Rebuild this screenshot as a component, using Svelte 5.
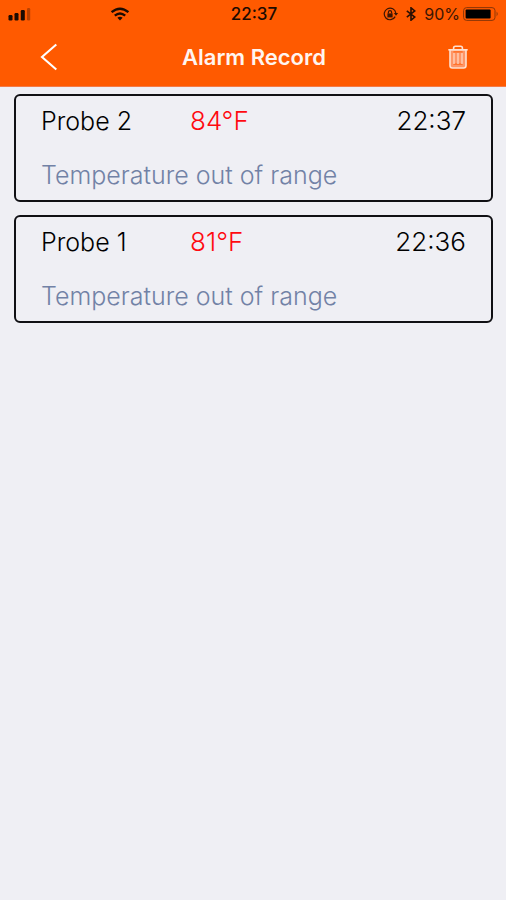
<script>
  const records = [
    { probe: 'Probe 2', temperature: '84°F', time: '22:37' },
    { probe: 'Probe 1', temperature: '81°F', time: '22:36' }
  ];
</script>

<div class="screen">
  <header>
    <div class="status">
      <div class="left">
        <svg class="signal" width="24" height="14" viewBox="0 0 24 14" aria-hidden="true">
          <rect x="0.5" y="8" width="4" height="5.5" rx="1.2" />
          <rect x="6.5" y="6" width="4" height="7.5" rx="1.2" />
          <rect x="12.8" y="3" width="4" height="10.5" rx="1.2" />
          <rect x="19" y="1" width="3.2" height="12.5" rx="1.2" opacity="0.3" />
        </svg>
        <svg class="wifi" width="20" height="14" viewBox="0 0 20 14" fill="none" stroke="#1c0b02" stroke-width="2.4" aria-hidden="true">
          <path d="M1.6 5.2Q10-1.8 18.4 5.2" />
          <path d="M4.8 8.6Q10 4.2 15.2 8.6" />
          <path d="M7.4 10.8Q10 8.6 12.6 10.8L10 13.6Z" fill="#1c0b02" stroke="none" />
        </svg>
      </div>
      <span class="clock">22:37</span>
      <div class="right">
        <svg width="16" height="14" viewBox="0 0 16 14" fill="none" stroke="#3b1604" stroke-width="1.2" aria-hidden="true">
          <path d="M12.2 9.6A5.8 5.8 0 1 1 12.8 6.2" />
          <path d="M10.8 6h4.4L13 8.8Z" fill="#3b1604" stroke="none" />
          <rect x="4.4" y="6.4" width="5.2" height="4" fill="#3b1604" stroke="none" />
          <path d="M5.4 6.6V5.2a1.6 1.6 0 0 1 3.2 0v1.4" />
        </svg>
        <svg class="bluetooth" width="10" height="14" viewBox="0 0 10 14" fill="none" stroke="#2b1003" stroke-width="1.6" aria-hidden="true">
          <path d="M0.8 3.8l8 6.2L5 13.2V0.8L8.8 4 0.8 10.2" />
        </svg>
        <span class="percent">90%</span>
        <svg class="battery" width="37" height="14" viewBox="0 0 37 14" aria-hidden="true">
          <rect x="0.6" y="0.6" width="31.4" height="12.8" rx="3" fill="none" stroke="#8a3607" stroke-width="1" />
          <rect x="2.6" y="2.4" width="25" height="9.2" rx="1" fill="#000" />
          <path d="M33.6 4.6q2.2 2.4 0 4.8Z" fill="#8a3607" />
        </svg>
      </div>
    </div>
    <nav>
      <button class="back" aria-label="Back">
        <svg width="18" height="28" viewBox="0 0 18 28" fill="none" stroke="#fff" stroke-width="2.1">
          <path d="M16.3 1.5L2 14l14.3 12.5" />
        </svg>
      </button>
      <h1>Alarm Record</h1>
      <button class="delete" aria-label="Delete records">
        <svg width="20" height="24" viewBox="0 0 20 24" fill="none" stroke="#ffe0d0" stroke-width="1.6">
          <path d="M0.3 4.8h19.4" />
          <path d="M5.6 4.6V3q0-1.8 1.8-1.8h5.2q1.8 0 1.8 1.8v1.6" />
          <path d="M2 5v15.6q0 2.4 2.4 2.4h11.2q2.4 0 2.4-2.4V5Z" fill="#ff9566" />
          <path d="M5.4 6.8h9.2M5.4 19.2h9.2" stroke="#ff6a1c" stroke-width="1.2" />
          <path d="M6 8v11M10 8v11M14 8v11" stroke="#ffd0b8" stroke-width="1.4" />
        </svg>
      </button>
    </nav>
  </header>

  <ul>
    {#each records as record}
      <li>
        <div class="summary">
          <span class="probe">{record.probe}</span>
          <span class="temperature">{record.temperature}</span>
          <time>{record.time}</time>
        </div>
        <p>Temperature out of range</p>
      </li>
    {/each}
  </ul>
</div>

<style>
  :global(body) {
    background: #efeff4;
  }

  .screen {
    min-height: 100vh;
    font-family: Inter, 'Liberation Sans', sans-serif;
    color: #0c0c0e;
  }

  header {
    background: #ff5a00;
    border-bottom: 1px solid #f47b48;
  }

  .status {
    display: grid;
    grid-template-columns: 1fr auto 1fr;
    align-items: center;
    height: 28px;
    padding: 0 6px 0 8px;
    color: #1c0b02;
    fill: #1c0b02;
  }

  .left,
  .right {
    display: flex;
    align-items: center;
  }

  .wifi {
    margin-left: 78px;
  }

  .clock {
    font-size: 17px;
    font-weight: 500;
  }

  .right {
    justify-content: flex-end;
  }

  .bluetooth {
    margin-left: 7px;
  }

  .percent {
    margin: 0 3px 0 8px;
    font-size: 16px;
    color: #3b1604;
  }

  nav {
    display: grid;
    grid-template-columns: 1fr auto 1fr;
    align-items: center;
    height: 58px;
    padding: 0 38px 0 40px;
  }

  h1 {
    margin: 0;
    font-size: 22px;
    font-weight: 600;
    color: #fff5f0;
  }

  button {
    display: flex;
    padding: 0;
    border: 0;
    background: none;
    cursor: pointer;
  }

  .back {
    justify-self: start;
  }

  .delete {
    justify-self: end;
  }

  ul {
    display: flex;
    flex-direction: column;
    gap: 13px;
    margin: 0;
    padding: 7px 13px 14px 14px;
    list-style: none;
  }

  li {
    padding: 8px 25px;
    border: 2px solid #101014;
    border-radius: 6px;
    font-size: 25px;
    font-weight: 300;
    line-height: 34px;
  }

  .summary {
    display: flex;
    color: #000;
  }

  .probe {
    flex: 0 0 149px;
  }

  .temperature {
    font-size: 26px;
    color: #ff0a10;
  }

  time {
    margin-left: auto;
    font-size: 26px;
  }

  p {
    margin: 20px 0 0;
    color: #7282a6;
  }
</style>
